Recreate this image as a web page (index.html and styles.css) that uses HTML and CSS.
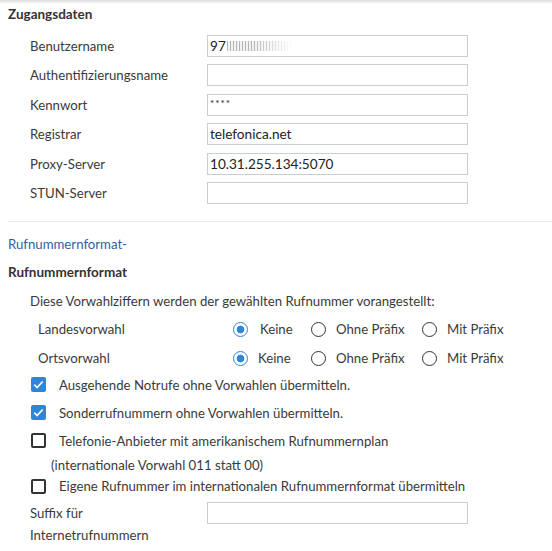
FILE: index.html
```html
<!DOCTYPE html>
<html lang="de">
<head>
    <meta charset="UTF-8">
    <meta name="viewport" content="width=device-width, initial-scale=1.0">
    <title>Telefonnummer bearbeiten</title>
    <link rel="stylesheet" href="styles.css">
</head>
<body>
    <div class="topbar"></div>

    <div class="page">
        <h2 class="section-title">Zugangsdaten</h2>

        <!-- Zugangsdaten des Anbieters -->
        <div class="form-grid">
            <label for="user">Benutzername</label>
            <div class="field" id="user"><span>97</span><span class="masked"></span></div>

            <label for="auth">Authentifizierungsname</label>
            <div class="field" id="auth"></div>

            <label for="pass">Kennwort</label>
            <div class="field field-pass" id="pass">****</div>

            <label for="registrar">Registrar</label>
            <div class="field" id="registrar">telefonica.net</div>

            <label for="proxy">Proxy-Server</label>
            <div class="field" id="proxy">10.31.255.134:5070</div>

            <label for="stun">STUN-Server</label>
            <div class="field" id="stun"></div>
        </div>

        <hr class="divider">

        <a class="toggle-link" href="#format">Rufnummernformat-</a>

        <h2 class="section-title sub">Rufnummernformat</h2>

        <p class="hint">Diese Vorwahlziffern werden der gewählten Rufnummer vorangestellt:</p>

        <div class="radio-row">
            <span class="radio-label">Landesvorwahl</span>
            <div class="radio-group">
                <span class="option"><span class="radio checked"></span><span class="opt-text first">Keine</span></span>
                <span class="option"><span class="radio"></span>Ohne Präfix</span>
                <span class="option"><span class="radio"></span>Mit Präfix</span>
            </div>
        </div>
        <div class="radio-row">
            <span class="radio-label">Ortsvorwahl</span>
            <div class="radio-group">
                <span class="option"><span class="radio checked"></span>Keine</span>
                <span class="option"><span class="radio"></span>Ohne Präfix</span>
                <span class="option"><span class="radio"></span>Mit Präfix</span>
            </div>
        </div>

        <div class="check-row">
            <span class="checkbox checked">
                <svg viewBox="0 0 16 16"><path d="M3.5 8.2l3 3 6-6.4" /></svg>
            </span>
            <span>Ausgehende Notrufe ohne Vorwahlen übermitteln.</span>
        </div>
        <div class="check-row">
            <span class="checkbox checked">
                <svg viewBox="0 0 16 16"><path d="M3.5 8.2l3 3 6-6.4" /></svg>
            </span>
            <span>Sonderrufnummern ohne Vorwahlen übermitteln.</span>
        </div>
        <div class="check-row">
            <span class="checkbox"></span>
            <span>Telefonie-Anbieter mit amerikanischem Rufnummernplan</span>
        </div>
        <p class="check-note">(internationale Vorwahl 011 statt 00)</p>
        <div class="check-row short">
            <span class="checkbox"></span>
            <span>Eigene Rufnummer im internationalen Rufnummernformat übermitteln</span>
        </div>

        <div class="form-grid suffix">
            <label for="suffix">Suffix für<br>Internetrufnummern</label>
            <div class="field" id="suffix"></div>
        </div>
    </div>
</body>
</html>
```

FILE: styles.css
```css
body {
    font-family: Lato, "Liberation Sans", sans-serif;
    font-size: 13.2px;
    margin: 0;
    padding: 0;
    background-color: #fff;
    color: #3a3a3a;
}

.topbar {
    height: 4px;
    background: linear-gradient(#dcdcdc, #fff);
}

.page {
    padding: 0 0 0 8px;
}

.section-title {
    margin: 0;
    font-size: 13.5px;
    font-weight: bold;
    line-height: 20px;
    color: #333;
}

.section-title.sub {
    margin-top: 8px;
}

.form-grid {
    display: grid;
    grid-template-columns: 177px 261px;
    row-gap: 7.4px;
    margin: 11px 0 0 22px;
    align-items: center;
}

.form-grid label {
    line-height: 22px;
}

.field {
    box-sizing: border-box;
    height: 22px;
    border: 1px solid #c7cfd4;
    padding: 0 2px;
    line-height: 20px;
    font-size: 13.6px;
    color: #222;
    display: flex;
    align-items: center;
}

.field-pass {
    font-size: 10px;
    letter-spacing: 1px;
    align-items: flex-start;
    line-height: 16px;
}

.masked {
    display: inline-block;
    width: 66px;
    height: 10px;
    margin-left: 1px;
    background: repeating-linear-gradient(90deg, #b5b5b5 0 1px, #f2f2f2 1px 3px);
    -webkit-mask-image: linear-gradient(90deg, #000 40%, transparent);
    mask-image: linear-gradient(90deg, #000 40%, transparent);
}

.divider {
    border: none;
    border-top: 1px solid #ebebeb;
    margin: 17px 0 0;
}

.toggle-link {
    display: block;
    margin-top: 12px;
    line-height: 20px;
    color: #2d62a9;
    text-decoration: none;
}

.hint {
    margin: 9px 0 0 22px;
    line-height: 20px;
}

.radio-row {
    display: grid;
    grid-template-columns: 195px auto;
    margin-left: 30px;
    height: 29px;
    align-items: center;
}

.hint + .radio-row {
    margin-top: 4px;
}

.radio-group {
    display: grid;
    grid-template-columns: 78px 111px auto;
    align-items: center;
}

.option {
    display: flex;
    align-items: center;
    gap: 10px;
}

.radio {
    box-sizing: border-box;
    width: 15px;
    height: 15px;
    border: 1.5px solid #333;
    border-radius: 50%;
    display: inline-block;
}

.radio.checked {
    border-color: #2f86d8;
    background: radial-gradient(circle, #2f86d8 0 3.5px, #fff 4.2px);
}

.opt-text.first {
    margin-left: 2px;
}

.check-row {
    display: flex;
    align-items: center;
    gap: 13px;
    height: 28px;
    margin-left: 23px;
}

.radio-row + .check-row {
    margin-top: -2px;
}

.check-row.short {
    height: 23px;
}

.checkbox {
    box-sizing: border-box;
    width: 15px;
    height: 15px;
    border: 2px solid #333;
    border-radius: 2px;
    flex-shrink: 0;
    display: inline-flex;
}

.checkbox.checked {
    border: none;
    background-color: #2f86d8;
}

.checkbox svg {
    width: 15px;
    height: 15px;
    fill: none;
    stroke: #fff;
    stroke-width: 1.8;
}

.check-note {
    margin: 0 0 0 43px;
    line-height: 20px;
}

.form-grid.suffix {
    margin-top: 4px;
    align-items: start;
}
```
